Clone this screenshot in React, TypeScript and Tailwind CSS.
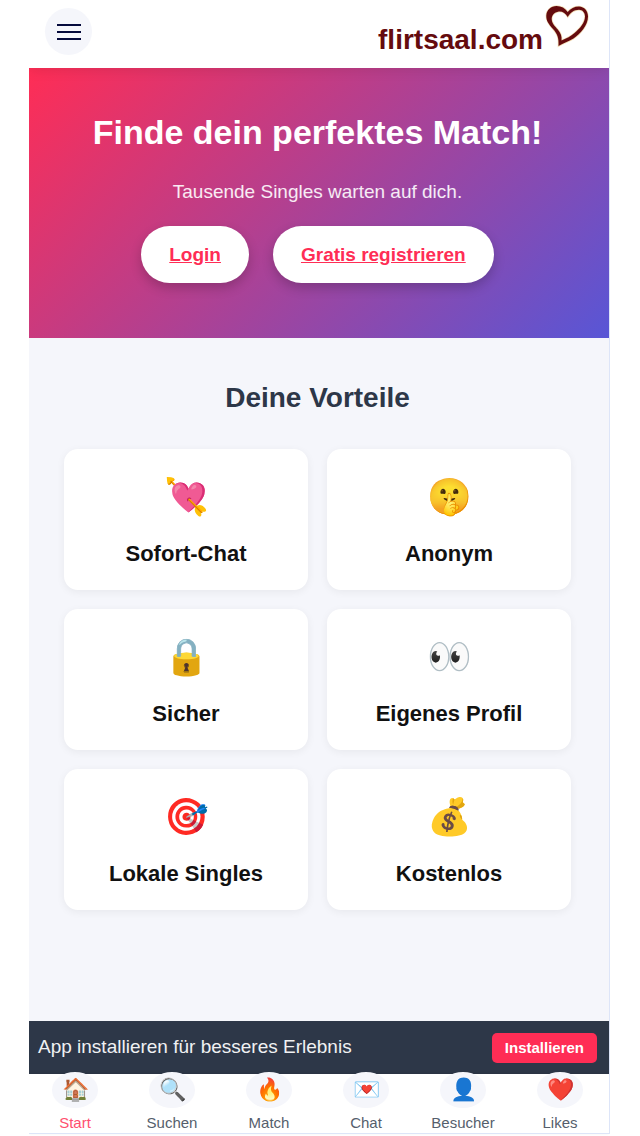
interface Benefit {
  emoji: string;
  title: string;
}

interface NavItem {
  emoji: string;
  label: string;
  active?: boolean;
}

const benefits: Benefit[] = [
  { emoji: '💘', title: 'Sofort-Chat' },
  { emoji: '🤫', title: 'Anonym' },
  { emoji: '🔒', title: 'Sicher' },
  { emoji: '👀', title: 'Eigenes Profil' },
  { emoji: '🎯', title: 'Lokale Singles' },
  { emoji: '💰', title: 'Kostenlos' },
];

const navItems: NavItem[] = [
  { emoji: '🏠', label: 'Start', active: true },
  { emoji: '🔍', label: 'Suchen' },
  { emoji: '🔥', label: 'Match' },
  { emoji: '💌', label: 'Chat' },
  { emoji: '👤', label: 'Besucher' },
  { emoji: '❤️', label: 'Likes' },
];

function HeartLogo() {
  return (
    <svg viewBox="0 0 48 48" className="size-12 shrink-0" aria-hidden="true">
      <path
        fillRule="evenodd"
        d="M15.500 46C16 38 14.500 34 10 29C5.500 24 3 20.500 3.300 15.500C3.600 10 8 6 13.500 6C18.500 6 22 8 24.700 12C27.500 8.500 31.500 6.500 36 6.500C41.500 6.800 45 11 45 16.500C45 25 37.500 34 30.500 38.500C25.500 41.500 20.500 43 15.500 46ZM18.500 40.500C24 38 27.500 36.500 31.500 33C37 28.500 42 22.500 42 16.500C42 12.500 39.500 9.700 36 9.700C31 9.700 27.500 12.500 24.700 17C22.500 13 19 11 15 11.700C10.500 12.500 8.300 16 8.800 20C9.300 24 12.300 26.500 14.800 29.500C17.800 33 19 36.500 18.500 40.500Z"
        className="fill-[#650b0e] stroke-[#f3dfb8] stroke-[1.5] [paint-order:stroke]"
      />
    </svg>
  );
}

function Header() {
  return (
    <header className="relative z-10 flex h-[68px] items-start justify-between bg-white pr-[18px] pl-4 shadow-[0_2px_12px_rgba(0,0,0,0.1)]">
      <button
        type="button"
        aria-label="Menü"
        className="mt-2 flex size-[47px] flex-col items-center justify-center gap-[5px] rounded-full bg-[#f5f6fb]"
      >
        <span className="h-0.5 w-6 bg-[#050a3c]" />
        <span className="h-0.5 w-6 bg-[#050a3c]" />
        <span className="h-0.5 w-6 bg-[#050a3c]" />
      </button>
      <a href="/" className="flex items-start text-[#650b0e]">
        <span className="mt-5 text-[28px] leading-10 font-bold">flirtsaal.com</span>
        <HeartLogo />
      </a>
    </header>
  );
}

function Hero() {
  return (
    <section className="flex h-[270px] flex-col items-center bg-[linear-gradient(135deg,#ff2d55,#5856d6)] pt-11 pr-[19px] pl-4 text-white">
      <h1 className="text-[34px] leading-10 font-bold">Finde dein perfektes Match!</h1>
      <p className="mt-6 text-[19px] leading-8 text-white/90">Tausende Singles warten auf dich.</p>
      <div className="mt-[18px] flex gap-6 text-[19px] font-bold text-[#ff2d55]">
        <a href="/login" className="rounded-full bg-white px-7 py-4 leading-[25px] underline shadow-[0_5px_12px_rgba(0,0,0,0.2)]">
          Login
        </a>
        <a href="/register" className="rounded-full bg-white px-7 py-4 leading-[25px] underline shadow-[0_5px_12px_rgba(0,0,0,0.2)]">
          Gratis registrieren
        </a>
      </div>
    </section>
  );
}

function Benefits() {
  return (
    <section className="flex-1 pt-10 pr-[38px] pl-[35px]">
      <h2 className="text-center text-[28px] leading-10 font-bold text-[#2d3748]">Deine Vorteile</h2>
      <div className="mt-[31px] grid grid-cols-2 gap-[19px]">
        {benefits.map((benefit) => (
          <article
            key={benefit.title}
            className="flex flex-col items-center rounded-[14px] bg-white pt-6 pb-5 shadow-[0_2px_9px_rgba(0,0,0,0.06)]"
          >
            <span className="text-[36px] leading-12">{benefit.emoji}</span>
            <h3 className="mt-[17px] text-[22px] leading-8 font-bold text-[#111]">{benefit.title}</h3>
          </article>
        ))}
      </div>
    </section>
  );
}

function InstallBar() {
  return (
    <div className="flex h-[53px] items-center justify-between bg-[#2d3748] pr-3 pl-[9px]">
      <span className="text-[19px] text-[#f0f1f3]">App installieren für besseres Erlebnis</span>
      <button
        type="button"
        className="rounded-[5px] bg-[#ff2d55] px-[13px] text-[15px] leading-[30px] font-bold text-white"
      >
        Installieren
      </button>
    </div>
  );
}

function BottomNav() {
  return (
    <nav className="flex h-[60px] justify-between border-b border-[#dde5f8] bg-white pr-4 pl-[13px] shadow-[0_-1px_3px_rgba(0,0,0,0.1)]">
      {navItems.map((item) => (
        <a
          key={item.label}
          href="#"
          className={`-mt-0.5 flex w-[66px] flex-col items-center ${item.active ? 'text-[#ff4f70]' : 'text-[#555e6c]'}`}
        >
          <span className="flex h-9 w-[46px] items-center justify-center rounded-[50%] bg-[#f5f6fb] text-[22px] leading-9">
            {item.emoji}
          </span>
          <span className="mt-[5px] text-[15px] leading-5">{item.label}</span>
        </a>
      ))}
    </nav>
  );
}

export default function App() {
  return (
    <div className="min-h-screen bg-white pr-[30px] pb-0.5 pl-[29px] font-['Liberation_Sans',Arial,sans-serif]">
      <div className="flex min-h-[calc(100vh-2px)] flex-col overflow-x-clip border-r border-[#dde5f8] bg-[#f5f6fb]">
        <Header />
        <Hero />
        <Benefits />
        <InstallBar />
        <BottomNav />
      </div>
    </div>
  );
}
